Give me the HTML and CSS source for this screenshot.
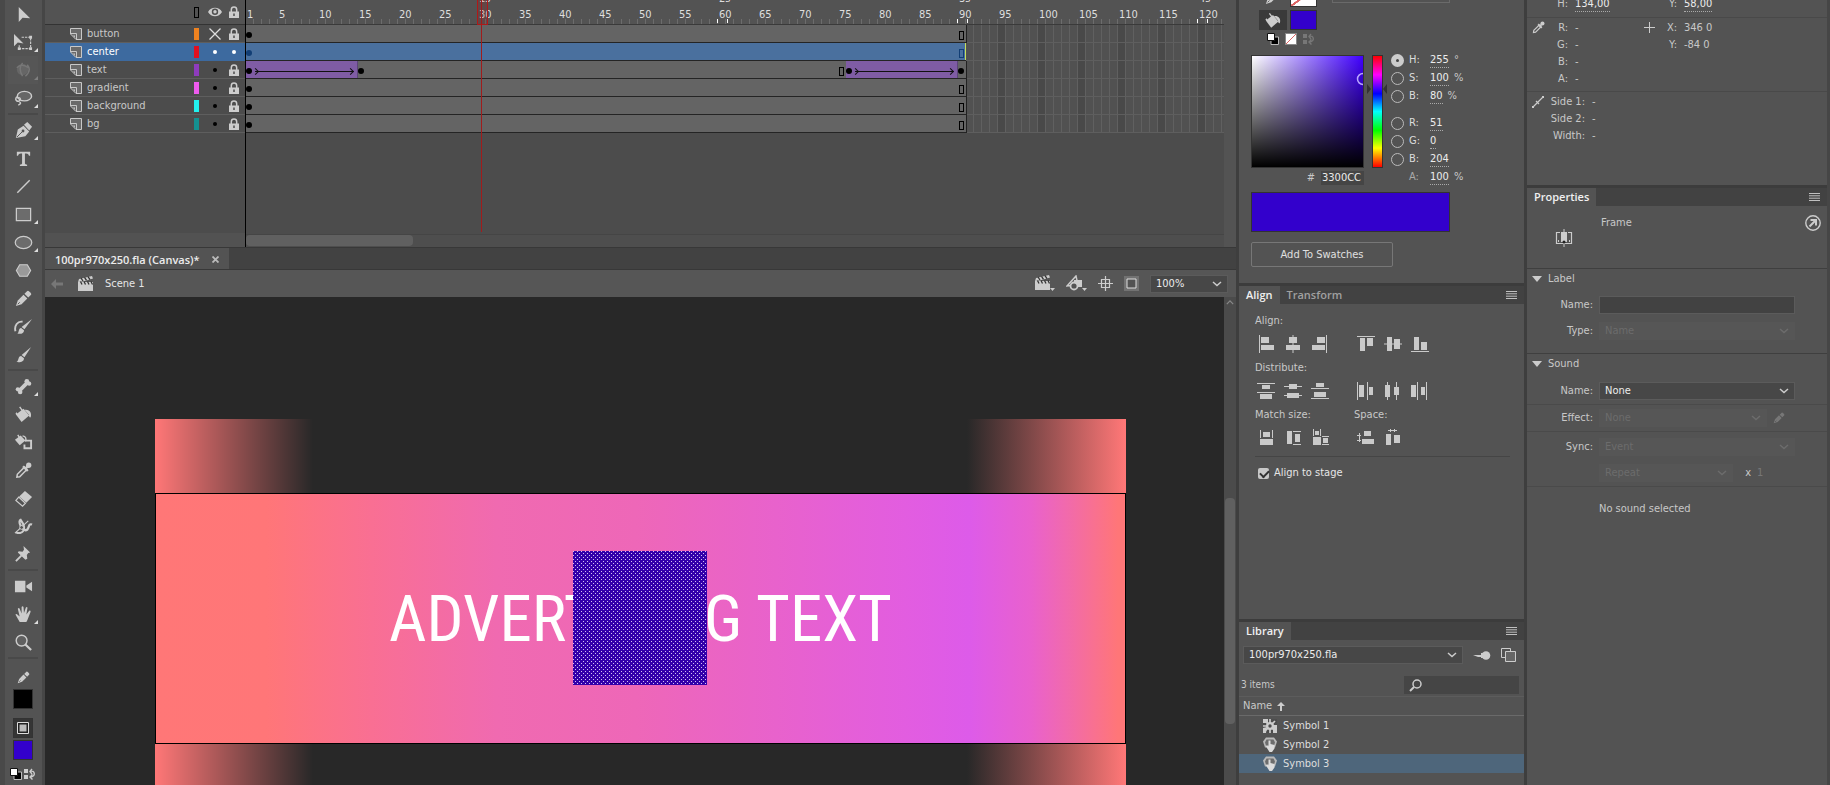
FILE: index.html
```html
<!DOCTYPE html>
<html lang="en">
<head>
    <meta charset="UTF-8">
    <meta name="viewport" content="width=device-width, initial-scale=1.0">
    <title>100pr970x250.fla</title>
    <link rel="stylesheet" href="styles.css">
</head>
<body>
    <!-- shared icons -->
    <svg class="sprite" aria-hidden="true">
        <symbol id="i-layer" viewBox="0 0 12 12"><path d="M.5.5h11v11H6L.5 6z" fill="#6a6a6a" stroke="#c8c8c8"/><path d="M1 5.500h5.500V11" fill="none" stroke="#c8c8c8"/><path d="M3 7.500h2v2z" fill="#c8c8c8"/></symbol>
        <symbol id="i-lock" viewBox="0 0 10 12"><path d="M2.300 6V3.700a2.700 2.700 0 0 1 5.400 0V6" fill="none" stroke="#cdcdcd" stroke-width="1.500"/><path d="M0 5.500h10V12H0z" fill="#cdcdcd"/><path d="M4.300 7.500h1.400v2.500H4.300z" fill="#444"/></symbol>
        <symbol id="i-eye" viewBox="0 0 14 10"><path d="M0 5C3-.6 11-.6 14 5 11 10.600 3 10.600 0 5z" fill="#cdcdcd"/><circle cx="7" cy="4.800" r="3.200" fill="#505050"/><circle cx="7" cy="4.800" r="1.700" fill="#cdcdcd"/></symbol>
        <symbol id="i-chev" viewBox="0 0 10 6"><path d="M1 1l4 3.500L9 1" fill="none" stroke="currentColor" stroke-width="1.500"/></symbol>
        <symbol id="i-menu" viewBox="0 0 11 8"><path d="M0 .5h11M0 2.800h11M0 5.200h11M0 7.500h11" stroke="#c0c0c0"/></symbol>
        <symbol id="i-clap" viewBox="0 0 16 15"><path d="M0 6h15v9H0z" fill="#ccc"/><path d="M0 6l1-3 13-3 1 2.500L5 5.500z" fill="#ccc"/><path d="M3 2l2 3M6.500 1.300l2 3M10 .6l2 3M2.500 5.500l1.500 3M6 5.500l1.500 3M9.500 5.500L11 8.500M13 5.500l1.500 3" stroke="#333" stroke-width="1.300"/></symbol>
        <symbol id="i-swatchpair" viewBox="0 0 12 12"><path d="M4 4h7.500v7.500H4z" fill="#000" stroke="#bbb"/><path d="M.5.5h7v7h-7z" fill="#fff" stroke="#111"/></symbol>
        <symbol id="i-swap" viewBox="0 0 12 12"><path d="M0 1h4v4H0zM0 7h4v4H0z" fill="currentColor"/><path d="M6 3.500c5-2 6 5 1 5.500M8 1L6 3.500 8 6M8.500 6.500L6 9l2.500 2.500" fill="none" stroke="currentColor" stroke-width="1.400"/></symbol>
        <symbol id="i-bucket" viewBox="0 0 20 18"><path d="M2 9l8-6 6 7-8 7z" fill="#ccc"/><path d="M6 1l5 7" stroke="#ccc" stroke-width="1.500"/><path d="M3 6.500C0 8 3 10 4 9M11 4c6-1 8 4 6.500 8-1 .5-2-1-2-3z" fill="#ccc"/></symbol>
        <symbol id="i-pencil" viewBox="0 0 18 18"><path d="M1 17l2-6 6-6 4 4-6 6z" fill="#ccc"/><path d="M10 4l3-3q1-.5 2 .5l1.500 1.500q1 1 .5 2l-3 3z" fill="#ccc"/><path d="M3 15l2-2" stroke="#555"/></symbol>
        <symbol id="i-dropper" viewBox="0 0 18 18"><path d="M2 16l.5-3L10 5.500 12.500 8 5 15.500z" fill="none" stroke="#ccc" stroke-width="1.600"/><path d="M8.500 4.500l5 5M11 7l4-4" stroke="#ccc" stroke-width="2.500"/><circle cx="14.500" cy="3.500" r="2.800" fill="#ccc"/></symbol>
        <symbol id="i-tri" viewBox="0 0 10 6"><path d="M0 0h10L5 6z" fill="#ccc"/></symbol>
        <symbol id="i-btn" viewBox="0 0 14 15"><path d="M3 .5h8l3 4-2 6H2L0 4.500z" fill="#b9b9b9"/><path d="M3.500 2.500h7l1.500 3-1 3H3L2 5.500z" fill="#6d6d6d"/><path d="M5.500 3.500h2V7l4 1v3.500L9 15H6.500L3 9.500l1-1 1.500 1z" fill="#dcdcdc"/></symbol>
    </svg>

    <nav class="tools" aria-label="Tools">
        <button class="tool" aria-label="Selection"><svg viewBox="0 0 20 20"><path d="M5 2v16l4-4.500 8 .5z" fill="#ccc"/></svg></button>
        <button class="tool more" aria-label="Free transform"><svg viewBox="0 0 20 20"><path d="M8 4.500h9.500v12H5.500V13" fill="none" stroke="#ccc" stroke-width="1.200" stroke-dasharray="2.500 1"/><path d="M16 3h3v3h-3zM16 15h3v3h-3zM4 15h3v3H4z" fill="#ccc"/><path d="M0 1v13l4-4 6 1z" fill="#ccc"/></svg></button>
        <button class="tool more off" aria-label="3D rotation" disabled><svg viewBox="0 0 20 20"><circle cx="9" cy="9" r="6" fill="#666"/><path d="M3 7q5-5 12 0M9 2q-5 6 0 14M14 4q5 6-2 12" fill="none" stroke="#777" stroke-width="1.500"/></svg></button>
        <button class="tool more" aria-label="Lasso"><svg viewBox="0 0 20 20"><ellipse cx="11" cy="7.500" rx="7.500" ry="5" fill="#666" stroke="#ccc" stroke-width="1.500"/><path d="M3 8c-3 4 1 6 3 4s-1-4-2-2M5 13c3 1 2 3-.5 4" fill="none" stroke="#ccc" stroke-width="1.500"/></svg></button>
        <hr>
        <button class="tool more" aria-label="Pen"><svg viewBox="0 0 20 20"><path d="M2 18l2-9 6-4 6 6-4 5z" fill="#ccc"/><path d="M10.500 4L14 1l5 5-3 4z" fill="#ccc"/><path d="M3 17l6-6" stroke="#535353"/><circle cx="9.500" cy="10.500" r="1.500" fill="#535353"/></svg></button>
        <button class="tool" aria-label="Text"><svg viewBox="0 0 20 20"><path d="M3 3h14v4h-1.200q-.5-2.200-3-2.200H11.500v10.500q0 1.200 2.300 1.200V18H6.200v-1.500q2.300 0 2.300-1.200V4.800H7.200q-2.500 0-3 2.200H3z" fill="#ccc"/></svg></button>
        <button class="tool" aria-label="Line"><svg viewBox="0 0 20 20"><path d="M3.500 16.500l13-13" stroke="#ccc" stroke-width="1.500"/></svg></button>
        <button class="tool more" aria-label="Rectangle"><svg viewBox="0 0 20 20"><path d="M2.500 3.500h15v13h-15z" fill="#6c6c6c" stroke="#ccc" stroke-width="1.300"/></svg></button>
        <button class="tool more" aria-label="Oval"><svg viewBox="0 0 20 20"><ellipse cx="10" cy="10" rx="8.700" ry="6.500" fill="#6c6c6c" stroke="#ccc" stroke-width="1.300"/></svg></button>
        <button class="tool" aria-label="Polygon"><svg viewBox="0 0 20 20"><path d="M6 4h8l3.500 6L14 16H6l-3.500-6z" fill="#999" stroke="#ccc" stroke-width="1.200"/></svg></button>
        <button class="tool" aria-label="Pencil"><svg viewBox="-1 -1 20 20"><use href="#i-pencil" width="18" height="18"/></svg></button>
        <button class="tool" aria-label="Fluid brush"><svg viewBox="0 0 20 20"><path d="M19 2l-8 11-3-2.500z" fill="#ccc"/><path d="M7.500 11.500l3 2.500c0 4-4 4-7 3.500 2-1 1-6 4-6z" fill="#ccc"/><path d="M9 5C4 4 0 9 1.500 15" fill="none" stroke="#ccc" stroke-width="2"/></svg></button>
        <button class="tool" aria-label="Brush"><svg viewBox="0 0 20 20"><path d="M18 2l-7 11-3-2.500z" fill="#ccc"/><path d="M7.500 11.500l3 2.500c0 4-4 4.500-8 4 3-1.500 1.500-6.500 5-6.500z" fill="#ccc"/></svg></button>
        <hr>
        <button class="tool more" aria-label="Bone"><svg viewBox="0 0 20 20"><path d="M6 14l8-8" stroke="#ccc" stroke-width="4"/><circle cx="13.500" cy="4.500" r="2.500" fill="#ccc"/><circle cx="16" cy="7" r="2.200" fill="#ccc"/><circle cx="4" cy="13" r="2.200" fill="#ccc"/><circle cx="6.500" cy="15.800" r="2.400" fill="#ccc"/></svg></button>
        <button class="tool" aria-label="Paint bucket"><svg viewBox="0 -1 20 20"><use href="#i-bucket" width="20" height="18"/></svg></button>
        <button class="tool" aria-label="Ink bottle"><svg viewBox="0 0 20 20"><path d="M1 7l6-4.500 5 5.500-6 5z" fill="#ccc"/><path d="M4 2l3 5M9 3q5 1 3 6" fill="none" stroke="#ccc" stroke-width="1.500"/><path d="M12 8h6v8h-7v-4" fill="none" stroke="#ccc" stroke-width="2"/></svg></button>
        <button class="tool" aria-label="Eyedropper"><svg viewBox="-1 -1 20 20"><use href="#i-dropper" width="18" height="18"/></svg></button>
        <button class="tool" aria-label="Eraser"><svg viewBox="0 0 20 20"><path d="M11.500 2L19 8.500 13 14.500 5.500 8z" fill="#ccc"/><path d="M5 8.500l7 6.500-3 3-7-6z" fill="none" stroke="#ccc" stroke-width="1.300"/></svg></button>
        <button class="tool" aria-label="Width"><svg viewBox="0 0 20 20"><path d="M2 16c6 3 13-2 5-13-3 1 0 9 5 11 5 0 2-8 7-6" fill="none" stroke="#ccc" stroke-width="2.300"/><path d="M1 17L15 4" stroke="#ccc" stroke-width="1.200"/><circle cx="8" cy="11" r="2" fill="#535353" stroke="#ccc"/></svg></button>
        <button class="tool" aria-label="Pin"><svg viewBox="0 0 20 20"><path d="M10 1l7 7-2 .5-1.500 2 .5 4-2 1L4 8l1-1.500 4 .5 1.500-2z" fill="#ccc"/><path d="M2 17l6-6" stroke="#ccc" stroke-width="2"/></svg></button>
        <hr>
        <button class="tool" aria-label="Camera"><svg viewBox="0 0 20 20"><path d="M1 4h11v12H1zM13 9l6-4v10l-6-4z" fill="#ccc"/></svg></button>
        <button class="tool more" aria-label="Hand"><svg viewBox="0 0 20 20"><path d="M6 18L1.500 10q1-1.500 2.500.5L6 12 4 4q1-1.500 2 0l2 5V2q1-1.500 2 0l.5 6.500L12.500 2.500q1.300-1 1.700.5L13 10l3-4q1.500-.5 1.500 1L14 16l-1 2z" fill="#ccc"/></svg></button>
        <button class="tool" aria-label="Zoom"><svg viewBox="0 0 20 20"><circle cx="8" cy="8" r="5.700" fill="#606060" stroke="#ccc" stroke-width="1.500"/><path d="M12 12l6 6" stroke="#ccc" stroke-width="2.300"/></svg></button>
        <hr>
        <span class="stroke-icon"><svg width="13" height="13"><use href="#i-pencil"/></svg></span>
        <button class="swatch black" aria-label="Stroke color"></button>
        <button class="swatch fillmode" aria-label="Fill"><svg width="12" height="12" viewBox="0 0 12 12"><path d="M.5.5h11v11H.5z" fill="#222" stroke="#ddd"/><path d="M2.500 2.500h7v7h-7z" fill="#bbb"/></svg></button>
        <button class="swatch blue" aria-label="Fill color"></button>
        <div class="mini">
            <button aria-label="Black and white"><svg width="12" height="12"><use href="#i-swatchpair"/></svg></button>
            <button aria-label="Swap colors"><svg width="12" height="12"><use href="#i-swap"/></svg></button>
        </div>
    </nav>

    <main class="work">
        <section class="timeline" aria-label="Timeline">
            <div class="layers">
                <div class="layer head"><span></span><span></span><i class="outline"></i><svg width="14" height="10"><use href="#i-eye"/></svg><svg width="10" height="12"><use href="#i-lock"/></svg></div>
                <div class="layer"><svg width="12" height="12"><use href="#i-layer"/></svg><span>button</span><i class="chip c-orange"></i><svg width="12" height="12" viewBox="0 0 12 12"><path d="M.5.5l11 11M11.500.5l-11 11" stroke="#ddd" stroke-width="1.300"/></svg><svg width="10" height="12"><use href="#i-lock"/></svg></div>
                <div class="layer active"><svg width="12" height="12"><use href="#i-layer"/></svg><span>center</span><i class="chip c-red"></i><i class="dot"></i><i class="dot"></i></div>
                <div class="layer"><svg width="12" height="12"><use href="#i-layer"/></svg><span>text</span><i class="chip c-violet"></i><i class="dot"></i><svg width="10" height="12"><use href="#i-lock"/></svg></div>
                <div class="layer"><svg width="12" height="12"><use href="#i-layer"/></svg><span>gradient</span><i class="chip c-pink"></i><i class="dot"></i><svg width="10" height="12"><use href="#i-lock"/></svg></div>
                <div class="layer"><svg width="12" height="12"><use href="#i-layer"/></svg><span>background</span><i class="chip c-cyan"></i><i class="dot"></i><svg width="10" height="12"><use href="#i-lock"/></svg></div>
                <div class="layer"><svg width="12" height="12"><use href="#i-layer"/></svg><span>bg</span><i class="chip c-teal"></i><i class="dot"></i><svg width="10" height="12"><use href="#i-lock"/></svg></div>
            </div>
            <div class="frames">
                <div class="ruler">
                    <span>1</span><span>5</span><span>10</span><span>15</span><span>20</span><span>25</span><span>30<b>1s</b></span><span>35</span><span>40</span><span>45</span><span>50</span><span>55</span><span class="sec">60<b>2s</b></span><span>65</span><span>70</span><span>75</span><span>80</span><span>85</span><span class="sec">90<b>3s</b></span><span>95</span><span>100</span><span>105</span><span>110</span><span>115</span><span class="sec">120<b>4s</b></span>
                </div>
                <div class="track"><div class="span" style="--n:90"><i class="key"></i><i class="end"></i></div></div>
                <div class="track current"><div class="span" style="--n:90"><i class="key"></i><i class="end"></i></div></div>
                <div class="track">
                    <div class="span tween" style="--n:14"><i class="key"></i><i class="arrow"></i></div>
                    <div class="span" style="--n:61"><i class="key"></i><i class="end"></i></div>
                    <div class="span tween" style="--n:14"><i class="key"></i><i class="arrow"></i></div>
                    <div class="span" style="--n:1"><i class="key"></i></div>
                </div>
                <div class="track"><div class="span" style="--n:90"><i class="key"></i><i class="end"></i></div></div>
                <div class="track"><div class="span" style="--n:90"><i class="key"></i><i class="end"></i></div></div>
                <div class="track"><div class="span" style="--n:90"><i class="key"></i><i class="end"></i></div></div>
                <div class="hscroll"><div class="thumb"></div></div>
                <div class="playhead" style="--frame:30"></div>
            </div>
        </section>

        <div class="doc-tabs"><button class="doc-tab">100pr970x250.fla (Canvas)* <svg width="7" height="7" viewBox="0 0 7 7"><path d="M.5.5l6 6M6.500.5l-6 6" stroke="#bbb" stroke-width="1.800"/></svg></button></div>

        <div class="scene-bar">
            <svg class="back" width="12" height="10" viewBox="0 0 12 10"><path d="M0 5l5-5v3.500h7v3H5V10z" fill="#777"/></svg>
            <svg width="16" height="15"><use href="#i-clap"/></svg>
            <span class="scene-name">Scene 1</span>
            <button aria-label="Edit scene"><svg width="20" height="17" viewBox="0 0 20 17"><use href="#i-clap" width="16" height="15"/><path d="M15 13h5l-2.500 3z" fill="#ccc"/></svg></button>
            <button aria-label="Edit symbols"><svg width="21" height="17" viewBox="0 0 21 17"><path d="M1 11L10 1l2 9z" fill="none" stroke="#ccc" stroke-width="1.500"/><path d="M8 5h8v7H8z" fill="#ccc"/><circle cx="8" cy="11" r="3.500" fill="#535353" stroke="#ccc" stroke-width="1.800"/><path d="M16 13h5l-2.500 3z" fill="#ccc"/></svg></button>
            <button aria-label="Center stage"><svg width="15" height="15" viewBox="0 0 15 15"><path d="M3.500 3.500h8v8h-8zM7.500 0v15M0 7.500h15" fill="none" stroke="#ccc" stroke-width="1.200"/></svg></button>
            <button class="clip" aria-label="Clip content"><svg width="15" height="15" viewBox="0 0 15 15"><path d="M3 3h9v9H3z" fill="#535353" stroke="#ddd"/></svg></button>
            <div class="select zoom"><select aria-label="Zoom"><option>100%</option></select><svg width="10" height="6"><use href="#i-chev"/></svg></div>
        </div>

        <div class="canvas">
            <div class="pasteboard">
                <div class="sides"></div>
                <div class="stage">
                    <p class="ad-text">ADVERTISING TEXT</p>
                    <div class="selected-shape"></div>
                </div>
            </div>
            <div class="vscroll"><svg width="8" height="5" viewBox="0 0 10 6"><path d="M1 5l4-4 4 4" fill="none" stroke="#888" stroke-width="1.500"/></svg><div class="thumb"></div></div>
        </div>
    </main>

    <aside class="column">
        <section class="color">
            <div class="source">
                <div class="fill-row top"><button class="mode flat" aria-label="Stroke"><svg width="16" height="16"><use href="#i-pencil"/></svg></button><button class="well none" aria-label="No stroke"></button><i class="type-edge"></i></div>
                <div class="fill-row"><button class="mode" aria-label="Fill"><svg width="18" height="17"><use href="#i-bucket"/></svg></button><button class="well" aria-label="Fill color"></button></div>
                <div class="resets">
                    <button aria-label="Black and white"><svg width="12" height="12"><use href="#i-swatchpair"/></svg></button>
                    <button class="nocolor" aria-label="No color"></button>
                    <button class="dim" aria-label="Swap colors"><svg width="12" height="12"><use href="#i-swap"/></svg></button>
                </div>
            </div>
            <div class="picker">
                <div class="picker-left">
                    <div class="sv"><svg class="ring" width="8" height="14" viewBox="0 0 8 14"><path d="M8 1.500a5.500 5.500 0 0 0 0 11" fill="none" stroke="#b9a6ff" stroke-width="1.500"/></svg></div>
                    <label class="hex"># <input type="text" value="3300CC" size="6"></label>
                </div>
                <div class="hue"><svg width="20" height="10" viewBox="0 0 20 10"><path d="M0 0v10l4-5zM20 0v10l-4-5z" fill="#333"/></svg></div>
                <div class="values">
                    <label class="value"><input type="radio" name="ch" checked><span>H:</span><a href="#">255</a> °</label>
                    <label class="value"><input type="radio" name="ch"><span>S:</span><a href="#">100</a> %</label>
                    <label class="value"><input type="radio" name="ch"><span>B:</span><a href="#">80</a> %</label>
                    <label class="value gap"><input type="radio" name="ch"><span>R:</span><a href="#">51</a></label>
                    <label class="value"><input type="radio" name="ch"><span>G:</span><a href="#">0</a></label>
                    <label class="value"><input type="radio" name="ch"><span>B:</span><a href="#">204</a></label>
                    <div class="value alpha"><i></i><span>A:</span><a href="#">100</a> %</div>
                </div>
            </div>
            <div class="preview"></div>
            <button class="add">Add To Swatches</button>
        </section>

        <section class="align">
            <div class="tabs"><button class="on">Align</button><button>Transform</button><svg width="11" height="8"><use href="#i-menu"/></svg></div>
            <div class="align-body">
                <h2>Align:</h2>
                <div class="icons">
                    <button aria-label="Align left"><svg viewBox="0 0 18 18"><path d="M2 0h1v18H2zM4 2h8v6H4zM4 10h13v5H4z"/></svg></button>
                    <button aria-label="Align center"><svg viewBox="0 0 18 18"><path d="M8.500 0h1v18h-1zM5 2h8v6H5zM2 10h14v5H2z"/></svg></button>
                    <button aria-label="Align right"><svg viewBox="0 0 18 18"><path d="M15 0h1v18h-1zM6 2h8v6H6zM1 10h13v5H1z"/></svg></button>
                    <button class="second" aria-label="Align top"><svg viewBox="0 0 18 18"><path d="M0 1h18v1H0zM3 3h5v13H3zM10 3h6v8h-6z"/></svg></button>
                    <button aria-label="Align middle"><svg viewBox="0 0 18 18"><path d="M0 8.500h18v1H0zM3 2h5v14H3zM10 4h6v10h-6z"/></svg></button>
                    <button aria-label="Align bottom"><svg viewBox="0 0 18 18"><path d="M0 16h18v1H0zM3 2h5v13H3zM10 7h6v8h-6z"/></svg></button>
                </div>
                <h2>Distribute:</h2>
                <div class="icons">
                    <button aria-label="Distribute top"><svg viewBox="0 0 18 18"><path d="M0 1h18v1H0zM5 3h8v4H5zM0 10h18v1H0zM3 12h12v5H3z"/></svg></button>
                    <button aria-label="Distribute vertical center"><svg viewBox="0 0 18 18"><path d="M0 4h18v1H0zM5 2h8v5H5zM0 13h18v1H0zM3 11h12v5H3z"/></svg></button>
                    <button aria-label="Distribute bottom"><svg viewBox="0 0 18 18"><path d="M5 1h8v4H5zM0 6h18v1H0zM3 10h12v5H3zM0 16h18v1H0z"/></svg></button>
                    <button class="second" aria-label="Distribute left"><svg viewBox="0 0 18 18"><path d="M0 0h1v18H0zM2 3h5v12H2zM10 0h1v18h-1zM12 5h4v8h-4z"/></svg></button>
                    <button aria-label="Distribute center"><svg viewBox="0 0 18 18"><path d="M3 0h1v18H3zM1 3h5v12H1zM12 0h1v18h-1zM10 5h5v8h-5z"/></svg></button>
                    <button aria-label="Distribute right"><svg viewBox="0 0 18 18"><path d="M0 3h5v12H0zM6 0h1v18H6zM10 5h4v8h-4zM15 0h1v18h-1z"/></svg></button>
                </div>
                <div class="two"><h2>Match size:</h2><h2>Space:</h2></div>
                <div class="icons">
                    <button aria-label="Match width"><svg viewBox="0 0 18 18"><path d="M3 1h1v8H3zM15 1h1v8h-1zM6 3h7v5H6zM3 10h13v6H3z"/></svg></button>
                    <button aria-label="Match height"><svg viewBox="0 0 18 18"><path d="M3 2h5v13H3zM9 2h8v1H9zM9 15h8v1H9zM11 5h5v8h-5z"/></svg></button>
                    <button aria-label="Match both"><svg viewBox="0 0 18 18"><path d="M2 0h1v7H2zM9 0h1v7H9zM4 2h4v4H4zM2 8h8v8H2zM11 7h7v1h-7zM11 15h7v1h-7zM12 9h5v5h-5z"/></svg></button>
                    <button class="second" aria-label="Space vertically"><svg viewBox="0 0 18 18"><path d="M7 2h7v5H7zM5 10h12v5H5zM0 6h4v1H0zM0 11h4v1H0zM2 4h1v9H2z"/></svg></button>
                    <button aria-label="Space horizontally"><svg viewBox="0 0 18 18"><path d="M2 5h5v11H2zM10 6h6v8h-6zM4 1h9v1H4zM6 0h1v3H6zM10 0h1v3h-1z"/></svg></button>
                </div>
                <hr>
                <label class="check"><input type="checkbox" checked><span>Align to stage</span></label>
            </div>
        </section>

        <section class="library">
            <div class="tabs"><button class="on">Library</button><svg width="11" height="8"><use href="#i-menu"/></svg></div>
            <div class="lib-doc">
                <div class="select"><select aria-label="Library document"><option>100pr970x250.fla</option></select><svg width="10" height="6"><use href="#i-chev"/></svg></div>
                <button aria-label="Pin library"><svg width="18" height="9" viewBox="0 0 18 9"><path d="M0 4h9v2H5z" fill="#ccc"/><circle cx="13" cy="4.500" r="4.300" fill="#ccc"/><path d="M8 2h3v5H8z" fill="#ccc"/></svg></button>
                <button aria-label="New library panel"><svg width="15" height="14" viewBox="0 0 15 14"><path d="M.5.5h9v9h-9z" fill="none" stroke="#ccc"/><path d="M4.500 3.500h10v10h-10z" fill="#666" stroke="#ccc"/></svg></button>
            </div>
            <div class="lib-search"><span>3 items</span><label><svg width="13" height="13" viewBox="0 0 13 13"><circle cx="8" cy="5" r="4" fill="none" stroke="#ccc" stroke-width="1.500"/><path d="M5 8l-4 4" stroke="#ccc" stroke-width="2"/></svg><input type="search" aria-label="Search library"></label></div>
            <div class="lib-head">Name <svg width="8" height="9" viewBox="0 0 8 9"><path d="M0 4l4-4 4 4zM3 3h2v6H3z" fill="#ccc"/></svg></div>
            <ul class="symbols">
                <li><svg width="14" height="14" viewBox="0 0 14 14"><path d="M0 0h14v14H0z" fill="#4c4c4c"/><path d="M0 0h5v4H0zM10 6h4v8h-4zM0 9l4-1-1 6H0z" fill="#ccc"/><circle cx="7" cy="7" r="4" fill="#ccc"/><path d="M7 0v14M0 7h14M2 2l10 10M12 2L2 12" stroke="#ccc" stroke-width="1.700"/><circle cx="7" cy="7" r="1.700" fill="#4c4c4c"/></svg>Symbol 1</li>
                <li><svg width="14" height="15"><use href="#i-btn"/></svg>Symbol 2</li>
                <li class="sel"><svg width="14" height="15"><use href="#i-btn"/></svg>Symbol 3</li>
            </ul>
        </section>
    </aside>

    <aside class="column right">
        <section class="info">
            <div class="info-grid size"><i></i><span>H:</span><a href="#">134,00</a><i></i><span>Y:</span><a href="#">58,00</a></div>
            <div class="info-grid">
                <svg width="13" height="13"><use href="#i-dropper"/></svg><span>R:</span><span>-</span><svg width="11" height="11" viewBox="0 0 11 11"><path d="M5.500 0v11M0 5.500h11" stroke="#ccc"/></svg><span>X:</span><span>346 0</span>
                <i></i><span>G:</span><span>-</span><i></i><span>Y:</span><span>-84 0</span>
                <i></i><span>B:</span><span>-</span><i></i><i></i><i></i>
                <i></i><span>A:</span><span>-</span><i></i><i></i><i></i>
            </div>
            <div class="info-grid sides-info">
                <svg width="12" height="12" viewBox="0 0 12 12"><path d="M1 11L11 1M4 5l3 3" stroke="#ccc" stroke-width="1.200"/><path d="M0 10h2v2H0zM10 0h2v2h-2z" fill="#ccc"/></svg><span>Side 1:</span><span>-</span>
                <i></i><span>Side 2:</span><span>-</span>
                <i></i><span>Width:</span><span>-</span>
            </div>
        </section>

        <section class="properties">
            <div class="tabs"><button class="on">Properties</button><svg width="11" height="8"><use href="#i-menu"/></svg></div>
            <div class="subject">
                <svg class="frame-icon" width="18" height="18" viewBox="0 0 18 18"><path d="M1.500 3v12M16.500 3v12M1 3.500h4M13 3.500h4M1 14.500h16" stroke="#ccc" stroke-width="1.200"/><path d="M6 3h6v10H6z" fill="#ccc"/><path d="M9 0v4M9 14v4" stroke="#ccc"/><circle cx="9" cy="13" r="1.500" fill="#222"/><path d="M3 11h1v2H3zM14 11h1v2h-1z" fill="#ccc"/></svg>
                <span>Frame</span>
                <button aria-label="Help"><svg width="16" height="16" viewBox="0 0 16 16"><circle cx="8" cy="8" r="7.200" fill="none" stroke="#ccc" stroke-width="1.400"/><path d="M4.500 11.500L10 6M5.500 5H11v5.500" fill="none" stroke="#ccc" stroke-width="2"/></svg></button>
            </div>
            <h2><svg width="10" height="6"><use href="#i-tri"/></svg>Label</h2>
            <div class="group label-group">
                <div class="row"><label for="lname">Name:</label><input type="text" id="lname"></div>
                <div class="row"><label for="ltype">Type:</label><div class="select off"><select id="ltype" disabled><option>Name</option></select><svg width="10" height="6"><use href="#i-chev"/></svg></div></div>
            </div>
            <h2><svg width="10" height="6"><use href="#i-tri"/></svg>Sound</h2>
            <div class="group sound-group">
                <div class="row ruled"><label for="sname">Name:</label><div class="select"><select id="sname"><option>None</option></select><svg width="10" height="6"><use href="#i-chev"/></svg></div></div>
                <div class="row ruled"><label for="seffect">Effect:</label><div class="select off"><select id="seffect" disabled><option>None</option></select><svg width="10" height="6"><use href="#i-chev"/></svg></div><button class="edit" aria-label="Edit sound" disabled><svg width="12" height="12"><use href="#i-pencil"/></svg></button></div>
                <div class="row"><label for="ssync">Sync:</label><div class="select off"><select id="ssync" disabled><option>Event</option></select><svg width="10" height="6"><use href="#i-chev"/></svg></div></div>
                <div class="row ruled repeat"><span></span><div class="select off"><select aria-label="Repeat" disabled><option>Repeat</option></select><svg width="10" height="6"><use href="#i-chev"/></svg></div><span class="times">x</span><span class="count">1</span></div>
            </div>
            <p class="status">No sound selected</p>
        </section>
    </aside>
</body>
</html>
```
FILE: styles.css
```css
* {
    box-sizing: border-box;
}

body {
    margin: 0;
    height: 100vh;
    display: flex;
    overflow: hidden;
    background: #535353;
    color: #c8c8c8;
    font-family: "DejaVu Sans Condensed", "Noto Sans", sans-serif;
    font-size: 11px;
    line-height: 16px;
}

button {
    padding: 0;
    border: 0;
    background: none;
    color: inherit;
    font: inherit;
    display: flex;
    align-items: center;
    justify-content: center;
}

input,
select {
    font: inherit;
    color: #ececec;
    border: 0;
    min-width: 0;
}

h2 {
    margin: 0;
    font-size: 11px;
    font-weight: normal;
}

a {
    color: #ececec;
    text-decoration: none;
    border-bottom: 1px dotted #aaa;
    line-height: 14px;
}

svg {
    display: block;
    flex: none;
}

.sprite {
    position: absolute;
    width: 0;
    height: 0;
}

/* toolbar */
.tools {
    width: 45px;
    flex: none;
    padding: 0 4px 0 3px;
    border-right: 3px solid #464646;
    border-left: 5px solid #494949;
    display: flex;
    flex-direction: column;
    align-items: center;
}

.tools hr {
    width: 100%;
    margin: 1px 0;
    border: 0;
    border-top: 2px solid #494949;
}

.tool {
    width: 30px;
    height: 28px;
    flex: none;
    position: relative;
}

.tool svg {
    width: 19px;
    height: 19px;
}

.more::after {
    content: "";
    position: absolute;
    right: 0;
    bottom: 4px;
    border: 2px solid #ddd;
    border-top-color: transparent;
    border-left-color: transparent;
}

.more.off::after {
    opacity: 0.3;
}

.stroke-icon {
    padding: 11px 0 5px;
}

.swatch {
    width: 20px;
    height: 20px;
    flex: none;
    border: 1px solid #333;
}

.swatch.black {
    background: #000;
}

.swatch.fillmode {
    margin-top: 9px;
    background: #353535;
}

.swatch.blue {
    margin-top: 2px;
    background: #3300cc;
}

.mini {
    display: flex;
    gap: 2px;
    padding-top: 8px;
    color: #ccc;
}

/* timeline */
.work {
    flex: 1;
    min-width: 0;
    display: flex;
    flex-direction: column;
}

.timeline {
    height: 248px;
    flex: none;
    display: flex;
    padding-right: 12px;
    background: #535353;
    border-bottom: 1px solid #383838;
}

.layers {
    width: 201px;
    flex: none;
    background: #4c4c4c;
    border-right: 1px solid #000;
    box-shadow: inset 0 -14px #525252;
}

.layer {
    height: 18px;
    padding-left: 25px;
    border-bottom: 1px solid #5e5e5e;
    display: grid;
    grid-template-columns: 17px 104px 10px 28px 10px;
    align-items: center;
    justify-items: center;
}

.layer > span {
    justify-self: start;
}

.layer.head {
    height: 25px;
    background: #535353;
    border-bottom-color: #333;
}

.layer > svg:first-child {
    justify-self: start;
}

.outline {
    width: 5px;
    height: 11px;
    border: 1px solid #000;
}

.layer.active {
    background: #3d6a9f;
    border-color: #3d6a9f;
    color: #fff;
}

.chip {
    width: 5px;
    height: 12px;
}

.c-orange { background: #ee8220; }
.c-red { background: #e21020; }
.c-violet { background: #8e3bbd; }
.c-pink { background: #ee5bee; }
.c-cyan { background: #22f0ee; }
.c-teal { background: #149090; }

.dot {
    width: 4px;
    height: 4px;
    border-radius: 50%;
    background: #000;
}

.active .dot {
    background: #fff;
}

.frames {
    flex: 1;
    min-width: 0;
    position: relative;
    overflow: hidden;
    display: flex;
    flex-direction: column;
    background: #4c4c4c;
}

.ruler {
    height: 25px;
    flex: none;
    display: flex;
    color: #dedede;
    background: repeating-linear-gradient(90deg, transparent 0 7px, #6c6c6c 7px 8px) 0 100% / 100% 5px no-repeat, #535353;
    border-bottom: 1px solid #3a3a3a;
}

.ruler span {
    width: 40px;
    flex: none;
    padding: 7px 0 0 1px;
    position: relative;
    line-height: 16px;
}

.ruler span:first-child {
    width: 32px;
}

.ruler b {
    position: absolute;
    left: 1px;
    top: -8px;
    font-weight: normal;
    line-height: 14px;
}

.sec::after {
    content: "";
    position: absolute;
    left: -1px;
    bottom: 1px;
    width: 9px;
    height: 4px;
    border: solid #fff;
    border-width: 0 1px;
}

.track {
    height: 18px;
    flex: none;
    display: flex;
    border-bottom: 1px solid #5e5e5e;
    background:
        repeating-linear-gradient(90deg, transparent 0 7px, #606060 7px 8px),
        repeating-linear-gradient(90deg, #515151 0 32px, #494949 32px 40px);
}

.span {
    width: calc(var(--n) * 8px);
    height: 18px;
    flex: none;
    padding: 3px 1px 0 0;
    display: flex;
    align-items: center;
    justify-content: space-between;
    background: #646464;
    border-bottom: 1px solid #242424;
}

.span:last-child {
    box-shadow: 1px 0 #222;
}

.current .span {
    background: #4a709e;
    box-shadow: inset -1px 0 #c5e05a;
}

.current .key {
    background: #123e75;
}

.current .end {
    border-color: #123e75;
}

.tween {
    background: #7f5ca4;
    box-shadow: inset -1px 0 #5c4478;
}

.key {
    width: 6px;
    height: 6px;
    border-radius: 50%;
    background: #000;
}

.end {
    width: 5px;
    height: 9px;
    margin-right: 1px;
    border: 1px solid #000;
}

.arrow {
    flex: 1;
    height: 1px;
    margin: 1px 4px 0 3px;
    background: #111;
    position: relative;
}

.arrow::before,
.arrow::after {
    content: "";
    position: absolute;
    top: -2px;
    width: 4px;
    height: 4px;
    border: solid #111;
    border-width: 1px 1px 0 0;
    transform: rotate(45deg);
}

.arrow::before {
    left: -2px;
}

.arrow::after {
    right: 0;
}

.hscroll {
    margin-top: auto;
    height: 13px;
    border-top: 1px solid #454545;
    background: #4e4e4e;
}

.hscroll .thumb {
    width: 167px;
    height: 11px;
    border-radius: 4px;
    background: #606060;
}

.playhead {
    position: absolute;
    top: 0;
    bottom: 15px;
    left: calc((var(--frame) - 1) * 8px);
    width: 8px;
    background: linear-gradient(#a01c1c, #a01c1c) 3px 0 / 1px 100% no-repeat;
}

.playhead::before {
    content: "";
    position: absolute;
    left: -1px;
    top: 0;
    width: 9px;
    height: 24px;
    border: 1px solid #b01818;
    border-top: 0;
    background: rgba(160, 20, 20, 0.2);
}

/* document */
.doc-tabs {
    height: 22px;
    flex: none;
    background: #424242;
    border-bottom: 1px solid #383838;
    display: flex;
}

.doc-tab {
    gap: 12px;
    padding: 2px 10px 0;
    background: #535353;
    color: #ececec;
    font-family: "Open Sans", sans-serif;
    font-weight: 600;
}

.scene-bar {
    height: 27px;
    flex: none;
    padding: 0 8px 0 6px;
    display: flex;
    align-items: center;
    gap: 11px;
    background: #565656;
}

.scene-bar .back {
    margin-right: 4px;
}

.scene-name {
    flex: 1;
    color: #e6e6e6;
}

.clip {
    background: #727272;
}

.select {
    position: relative;
    display: flex;
    align-items: center;
    background: #474747;
    border: 1px solid #5b5b5b;
    color: #ccc;
}

.select select {
    appearance: none;
    width: 100%;
    height: 16px;
    padding: 0 20px 0 5px;
    background: none;
}

.select svg {
    position: absolute;
    right: 5px;
    pointer-events: none;
}

.zoom {
    width: 78px;
}

.canvas {
    flex: 1;
    min-height: 0;
    display: flex;
    background: #282828;
}

.pasteboard {
    flex: 1;
    position: relative;
    overflow: hidden;
}

/* placed on the pasteboard, sizes are those of the document */
.stage,
.sides {
    position: absolute;
    left: 110px;
    width: 971px;
}

.sides {
    top: 122px;
    height: 400px;
    background: linear-gradient(90deg, #ff7777 0, #ff777700 158px, #ff777700 812px, #ff7777 970px);
}

.stage {
    top: 196px;
    height: 251px;
    border: 1px solid #000;
    display: flex;
    align-items: center;
    justify-content: center;
    background: linear-gradient(90deg, #ff7777 0, #ff7678 110px, #f96f93 215px, #f06ab0 340px, #ee67b8 480px, #e862cc 620px, #e25de0 750px, #dd5be9 813px, #e961cd 875px, #f26ba8 915px, #ff7678 962px);
}

.ad-text {
    margin: 0;
    color: #fff;
    font-family: "Roboto Condensed", "Open Sans Condensed", "Liberation Sans", sans-serif;
    font-size: 65px;
    line-height: 72px;
    white-space: nowrap;
}

.selected-shape {
    position: absolute;
    left: 417px;
    top: 57px;
    width: 134px;
    height: 134px;
    background:
        conic-gradient(at 1px 1px, transparent 75%, #d4c2f2 0) 0 0 / 4px 4px,
        conic-gradient(at 1px 1px, transparent 75%, #d4c2f2 0) 2px 2px / 4px 4px,
        #3300aa;
}

.vscroll {
    width: 12px;
    flex: none;
    background: #4b4b4b;
    display: flex;
    flex-direction: column;
    align-items: center;
    padding-top: 3px;
}

.vscroll .thumb {
    width: 10px;
    height: 226px;
    margin-top: 193px;
    border-radius: 4px;
    background: #606060;
}

/* panels */
.column {
    width: 288px;
    flex: none;
    border-left: 3px solid #3e3e3e;
    display: flex;
    flex-direction: column;
}

.column.right {
    width: 306px;
    border-right: 3px solid #464646;
}

.tabs {
    height: 21px;
    padding-right: 7px;
    border-top: 3px solid #3c3c3c;
    background: #424242;
    display: flex;
    align-items: center;
    font-family: "Open Sans", sans-serif;
    font-weight: 600;
    color: #a0a0a0;
}

.tabs button {
    height: 18px;
    padding: 0 7px;
}

.tabs .on {
    background: #535353;
    color: #f0f0f0;
}

.tabs svg {
    margin-left: auto;
}

.color {
    height: 283px;
    flex: none;
    padding-left: 12px;
}

.source {
    height: 51px;
    padding-left: 8px;
}

.fill-row {
    display: flex;
    gap: 3px;
    height: 20px;
}

.fill-row.top {
    height: 7px;
    margin-bottom: 3px;
    align-items: flex-end;
    overflow: hidden;
}

.mode {
    width: 28px;
    height: 20px;
    background: #3a3a3a;
}

.mode.flat {
    background: none;
}

.well {
    width: 27px;
    height: 20px;
    background: #3300cc;
    border: 1px solid #333;
}

.well.none,
.nocolor {
    background: linear-gradient(to bottom left, #fff 46%, #d66 47% 53%, #fff 54%);
    background: linear-gradient(to bottom right, #fff 46%, #d66 47% 53%, #fff 54%);
}

.type-edge {
    width: 118px;
    height: 4px;
    margin: 0 0 4px 12px;
    border: 1px solid #6a6a6a;
    border-top: 0;
}

.resets {
    display: flex;
    gap: 6px;
    padding: 3px 0 0 8px;
}

.nocolor {
    width: 12px;
    height: 12px;
    border: 1px solid #888;
}

.dim {
    color: #777;
}

.picker {
    display: flex;
    align-items: flex-start;
    gap: 8px;
}

.sv {
    position: relative;
    width: 113px;
    height: 113px;
    margin-top: 4px;
    border: 1px solid #333;
    background: linear-gradient(transparent, #000), linear-gradient(90deg, #fff, #4000ff);
}

.ring {
    position: absolute;
    right: 0;
    top: 16px;
}

.hex {
    display: flex;
    justify-content: flex-end;
    align-items: center;
    gap: 6px;
    padding-top: 2px;
}

.hex input {
    width: 43px;
    height: 14px;
    padding: 0 0 0 1px;
    background: #454545;
}

.hue {
    position: relative;
    width: 11px;
    height: 113px;
    margin-top: 4px;
    border: 1px solid #333;
    background: linear-gradient(#f00, #f0f 17%, #00f 34%, #0ff 50%, #0f0 67%, #ff0 83%, #f00);
}

.hue svg {
    position: absolute;
    left: -6px;
    top: 28px;
}

.value {
    height: 18px;
    display: flex;
    align-items: center;
    gap: 5px;
}

.value span {
    width: 16px;
    color: #dcdcdc;
}

.value.gap {
    margin-top: 9px;
}

.value i {
    width: 13px;
}

.alpha span {
    color: #aaa;
}

.value input {
    appearance: none;
    width: 13px;
    height: 13px;
    flex: none;
    margin: 0;
    border: 1px solid #bbb;
    border-radius: 50%;
}

.value input:checked {
    border: 5px solid #ccc;
    background: #444;
}

.preview {
    width: 199px;
    height: 40px;
    margin: 6px 0 10px;
    background: #3300cc;
    border: 1px solid #333;
}

.add {
    width: 142px;
    height: 25px;
    border: 1px solid #777;
    border-radius: 2px;
    color: #e0e0e0;
}

.align-body {
    padding: 9px 14px 0 16px;
    height: 315px;
}

.icons {
    display: flex;
    gap: 9px;
    padding: 6px 0 7px 2px;
}

.icons svg {
    width: 18px;
    height: 18px;
    fill: #cacaca;
}

.icons .second {
    margin-left: 19px;
}

.two {
    display: grid;
    grid-template-columns: 99px 1fr;
}

.align-body hr {
    margin: 2px 0 8px;
    border: 0;
    border-top: 1px solid #454545;
}

.check {
    display: flex;
    align-items: center;
    gap: 5px;
    padding-left: 3px;
    color: #e6e6e6;
}

.check input {
    appearance: none;
    width: 11px;
    height: 11px;
    margin: 0;
    border-radius: 2px;
    background: #c8c8c8;
    position: relative;
}

.check input::after {
    content: "";
    position: absolute;
    left: 2px;
    top: 2px;
    width: 7px;
    height: 4px;
    border: solid #333;
    border-width: 0 0 2px 2px;
    transform: rotate(-45deg);
}

/* library */
.lib-doc {
    display: flex;
    align-items: center;
    gap: 10px;
    padding: 6px 8px 10px 4px;
}

.lib-doc .select {
    flex: 1;
}

.lib-search {
    display: flex;
    align-items: center;
    justify-content: space-between;
    padding: 2px 5px 2px 2px;
    font-size: 10px;
}

.lib-search label {
    width: 115px;
    height: 18px;
    padding-left: 5px;
    display: flex;
    align-items: center;
    background: #454545;
}

.lib-search input {
    width: 100%;
    background: none;
}

.lib-head {
    height: 20px;
    padding-left: 4px;
    display: flex;
    align-items: center;
    gap: 5px;
    border-top: 1px solid #5c5c5c;
    border-bottom: 1px solid #6a6a6a;
}

.symbols {
    list-style: none;
    margin: 0;
    padding: 0;
    color: #dedede;
}

.symbols li {
    height: 19px;
    padding-left: 24px;
    display: flex;
    align-items: center;
    gap: 6px;
}

.symbols .sel {
    background: #4e667b;
}

/* info */
.info {
    height: 185px;
    flex: none;
}

.info-grid {
    display: grid;
    grid-template-columns: 20px 23px 69px 20px 20px 1fr;
    grid-auto-rows: 17px;
    align-items: center;
    padding: 1px 0 4px 5px;
    border-bottom: 1px solid #494949;
}

.info-grid span:nth-child(3n + 2) {
    justify-self: end;
    margin-right: 7px;
}

.info-grid a {
    justify-self: start;
}

.info-grid.size {
    height: 18px;
    padding: 0 0 0 5px;
    align-content: end;
    grid-auto-rows: 26px;
}

.info-grid.sides-info {
    grid-template-columns: 15px 45px 1fr;
    border: 0;
}

/* properties */
.subject {
    height: 62px;
    display: flex;
    align-items: flex-start;
    padding: 9px 6px 0 28px;
    gap: 28px;
}

.frame-icon {
    margin-top: 14px;
}

.subject span {
    flex: 1;
}

.properties h2 {
    display: flex;
    align-items: center;
    gap: 6px;
    height: 20px;
    padding-left: 5px;
    border-top: 1px solid #3f3f3f;
}

.row {
    display: grid;
    grid-template-columns: 66px 196px 1fr;
    align-items: center;
    gap: 6px;
}

.row label {
    justify-self: end;
}

.row > input {
    height: 18px;
    background: #424242;
    border: 1px solid #5b5b5b;
}

.label-group {
    padding: 8px 0 13px;
    display: grid;
    gap: 8px;
}

.off,
.off select {
    color: #6c6c6c;
    background: #565656;
    border-color: #565656;
    opacity: 1;
}

.ruled {
    border-bottom: 1px solid #4a4a4a;
}

.sound-group {
    padding-top: 5px;
}

.sound-group .row {
    padding: 4px 0;
}

.sound-group .row:nth-child(2) {
    grid-template-columns: 66px 168px 1fr;
}

.sound-group .row:nth-child(3) {
    padding-top: 6px;
}

.edit {
    justify-self: start;
    opacity: 0.3;
}

.sound-group .repeat {
    grid-template-columns: 66px 134px 12px 1fr;
}

.times {
    justify-self: end;
}

.count {
    color: #777;
}

.status {
    margin: 14px 0 0 72px;
}
```
